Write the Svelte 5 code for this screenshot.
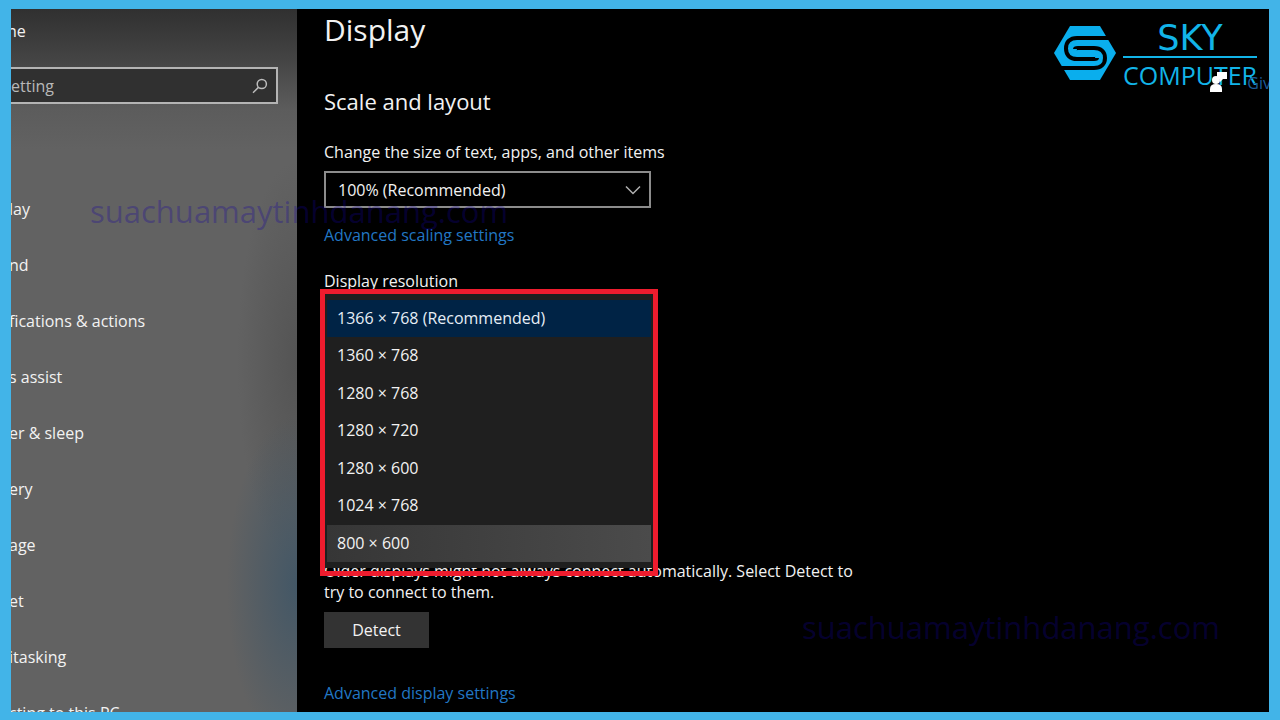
<script>
  const navItems = [
    { id: "display", title: "lay" },
    { id: "sound", title: "nd" },
    { id: "notifications", title: "fications & actions" },
    { id: "focus", title: "s assist" },
    { id: "power", title: "er & sleep" },
    { id: "battery", title: "ery" },
    { id: "storage", title: "age" },
    { id: "tablet", title: "et" },
    { id: "multitasking", title: "itasking" },
    { id: "projecting", title: "cting to this PC" },
  ];

  const resolutions = [
    "1366 × 768 (Recommended)",
    "1360 × 768",
    "1280 × 768",
    "1280 × 720",
    "1280 × 600",
    "1024 × 768",
    "800 × 600",
  ];

  let resolution = $state(resolutions[0]);
  let hovered = $state(6);
</script>

<div class="frame">
  <aside class="sidebar">
    <a class="home" href="#home">ne</a>
    <div class="search">
      <input type="text" aria-label="Find a setting" placeholder="etting" />
      <svg viewBox="0 0 16 16" width="16" height="16" aria-hidden="true">
        <circle cx="9.8" cy="6" r="4.6" />
        <path d="M6.4 9.4 1 14.8" />
      </svg>
    </div>
    <nav>
      {#each navItems as item (item.id)}
        <a href="#{item.id}">{item.title}</a>
      {/each}
    </nav>
  </aside>

  <main>
    <h1>Display</h1>
    <h2>Scale and layout</h2>

    <label for="scale">Change the size of text, apps, and other items</label>
    <div class="combo">
      <select id="scale">
        <option>100% (Recommended)</option>
        <option>125%</option>
      </select>
      <svg viewBox="0 0 16 10" width="16" height="10" aria-hidden="true">
        <path d="M1 1.5 8 8.5 15 1.5" />
      </svg>
    </div>
    <a class="link" href="#scaling">Advanced scaling settings</a>

    <div class="resolution">
      <label for="resolution">Display resolution</label>
      <div class="menu">
        <select id="resolution" size="7" bind:value={resolution}>
          {#each resolutions as res, i (res)}
            <option value={res} class:hovered={i === hovered} onmouseenter={() => (hovered = i)}>{res}</option>
          {/each}
        </select>
      </div>
    </div>

    <p>Older displays might not always connect automatically. Select Detect to try to connect to them.</p>
    <button type="button">Detect</button>
    <a class="link advanced" href="#advanced">Advanced display settings</a>
  </main>

  <div class="logo">
    <svg viewBox="0 0 62 54" width="62" height="54" aria-hidden="true">
      <path class="hex" d="M16 0H46L62 27 46 54H16L0 27Z" />
      <path class="groove" d="M60 12H23C16 12 12 16 12 22.500C12 29 16 33 23 33H40C43 33 43 32 43 32" />
      <path class="groove" d="M2 42H40C47 42 51 38 51 32C51 26 47 22 40 22H24C21 22 21 23 21 23" />
    </svg>
    <div class="brand">
      <span class="sky">SKY</span>
      <span class="computer">COMPUTER</span>
    </div>
  </div>

  <a class="feedback" href="#feedback">
    <svg viewBox="0 0 18 20" width="18" height="20" aria-hidden="true">
      <path d="M7 0H17V7H13L10 10V7H7Z" />
      <circle cx="6" cy="8" r="4" />
      <path d="M0 20V17Q0 12 6 12T12 17V20Z" />
    </svg>
    <span>Giv</span>
  </a>

  <span class="watermark first">suachuamaytinhdanang.com</span>
  <span class="watermark second">suachuamaytinhdanang.com</span>
</div>

<style>
  :global(body) {
    background: #000;
  }

  .frame {
    position: relative;
    display: flex;
    box-sizing: border-box;
    height: 100vh;
    overflow: hidden;
    border: solid #42b4e8;
    border-width: 9px 11px 8px;
    background: #000;
    color: #f2f2f2;
    font: 16px/22px "Open Sans", "Noto Sans", sans-serif;
  }

  a {
    color: inherit;
    text-decoration: none;
  }

  .sidebar {
    flex: none;
    width: 286px;
    overflow: hidden;
    background:
      radial-gradient(ellipse 70px 170px at 100% 82%, #435766, transparent),
      radial-gradient(ellipse 60px 200px at 100% 50%, #545454, transparent),
      linear-gradient(#303030, #444 50px, #5c5c5c 100px, #626262 140px);
  }

  .home {
    display: block;
    margin: 11px 0 25px -4px;
  }

  .search {
    display: flex;
    align-items: center;
    box-sizing: border-box;
    height: 37px;
    margin-right: 19px;
    padding-right: 8px;
    border: solid #b4b4b4;
    border-width: 2px 2px 2px 0;
    background: #303030;
  }

  .search input {
    flex: 1;
    min-width: 0;
    padding: 0;
    border: 0;
    outline: 0;
    background: none;
    color: inherit;
    font: inherit;
  }

  .search input::placeholder {
    color: #b8b8b8;
  }

  .search svg {
    fill: none;
    stroke: #bdbdbd;
    stroke-width: 1.5;
  }

  nav {
    margin: 77px 0 0 -2px;
  }

  nav a {
    display: block;
    line-height: 56px;
    white-space: nowrap;
  }

  main {
    display: flex;
    flex: 1;
    flex-direction: column;
    align-items: flex-start;
    min-width: 0;
    padding-left: 27px;
  }

  h1,
  h2 {
    margin: 0;
    font-weight: 400;
  }

  h1 {
    font-size: 30px;
    line-height: 42px;
  }

  h2 {
    margin: 35px 0 25px;
    font-size: 22px;
    line-height: 30px;
  }

  .combo {
    position: relative;
    width: 327px;
    margin: 8px 0 16px;
  }

  .combo select {
    width: 100%;
    height: 37px;
    padding: 0 12px;
    appearance: none;
    border: 2px solid #8c8c8c;
    border-radius: 0;
    background: #000;
    color: inherit;
    font: inherit;
  }

  .combo svg {
    position: absolute;
    top: 14px;
    right: 10px;
    fill: none;
    stroke: #b0b0b0;
    stroke-width: 1.5;
    pointer-events: none;
  }

  .link {
    color: #2277c4;
  }

  .resolution {
    position: relative;
    height: 291px;
    margin-top: 24px;
  }

  .menu {
    position: absolute;
    z-index: 1;
    top: 19px;
    left: -4px;
    box-sizing: border-box;
    width: 338px;
    height: 287px;
    border: 5px solid #ee1c2e;
  }

  .menu select {
    box-sizing: border-box;
    width: 100%;
    height: 274px;
    padding: 6px 2px;
    overflow: hidden;
    border: 0;
    border-radius: 0;
    outline: 0;
    background: #1f1f1f;
    color: inherit;
    color-scheme: dark;
    font: inherit;
    scrollbar-width: none;
  }

  .menu option {
    box-sizing: border-box;
    height: 37px;
    min-height: 0;
    padding: 7px 10px 0;
  }

  .menu option:nth-child(even) {
    height: 38px;
  }

  .menu option:checked {
    background: linear-gradient(#002345, #002345);
    -webkit-text-fill-color: #e6eef6;
  }

  .menu option.hovered {
    background: linear-gradient(90deg, #363636, #4b4b4b);
  }

  p {
    max-width: 530px;
    margin: 0 0 9px;
    line-height: 21px;
  }

  button {
    width: 105px;
    height: 36px;
    border: 0;
    background: #333;
    color: inherit;
    font: inherit;
  }

  .advanced {
    margin-top: 34px;
  }

  /* branding laid over the window */
  .logo {
    position: absolute;
    top: 11px;
    right: 12px;
    display: flex;
    align-items: flex-start;
    gap: 7px;
    color: #12b4e8;
  }

  .logo svg {
    margin-top: 6px;
  }

  .hex {
    fill: #0aaeed;
  }

  .groove {
    fill: none;
    stroke: #000;
    stroke-width: 4;
  }

  .brand {
    display: flex;
    flex-direction: column;
    width: 134px;
    text-align: center;
  }

  .sky {
    border-bottom: 2px solid;
    font: 35px/36px "DejaVu Sans", sans-serif;
  }

  .computer {
    font-size: 25px;
    line-height: 34px;
  }

  .feedback {
    position: absolute;
    top: 63px;
    right: -2px;
    display: flex;
    gap: 19px;
    color: #1d5c9c;
  }

  .feedback svg {
    fill: #fff;
  }

  .watermark {
    position: absolute;
    z-index: 2;
    color: rgba(20, 0, 160, 0.3);
    font-size: 31px;
    line-height: 40px;
    pointer-events: none;
  }

  .first {
    top: 182px;
    left: 79px;
  }

  .second {
    right: 49px;
    bottom: 65px;
  }
</style>
